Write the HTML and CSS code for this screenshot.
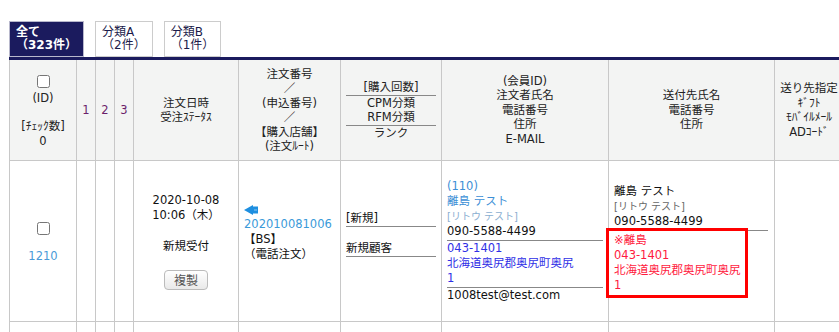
FILE: index.html
```html
<!DOCTYPE html>
<html lang="ja">
<head>
    <meta charset="UTF-8">
    <meta name="viewport" content="width=device-width, initial-scale=1.0">
    <title>受注一覧</title>

    <link rel="stylesheet" href="styles.css">
</head>
<body>
    <div class="page">
        <nav class="tabs">
            <a class="tab tab-active" href="#">全て<br>（323件）</a>
            <a class="tab" href="#">分類A<br>（2件）</a>
            <a class="tab" href="#">分類B<br>（1件）</a>
        </nav>

        <section class="list">
            <table class="orders">
                <colgroup>
                    <col class="col-id">
                    <col class="col-num">
                    <col class="col-num">
                    <col class="col-num">
                    <col class="col-date">
                    <col class="col-order">
                    <col class="col-rank">
                    <col class="col-customer">
                    <col class="col-shipping">
                    <col class="col-extra">
                </colgroup>
                <thead>
                    <tr>
                        <th>
                            <input type="checkbox" class="check">
                            <div>(ID)</div>
                            <div class="check-count">[ﾁｪｯｸ数]<br>0</div>
                        </th>
                        <th class="num">1</th>
                        <th class="num">2</th>
                        <th class="num">3</th>
                        <th>注文日時<br>受注ｽﾃｰﾀｽ</th>
                        <th>注文番号<br>／<br>(申込番号)<br>／<br>【購入店舗】<br>(注文ﾙｰﾄ)</th>
                        <th>
                            <div class="rank-head">[購入回数]</div>
                            <div class="rank-head">CPM分類<br>RFM分類</div>
                            <div>ランク</div>
                        </th>
                        <th>(会員ID)<br>注文者氏名<br>電話番号<br>住所<br>E-MAIL</th>
                        <th>送付先氏名<br>電話番号<br>住所</th>
                        <th class="extra">送り先指定<br>ｷﾞﾌﾄ<br>ﾓﾊﾞｲﾙﾒｰﾙ<br>ADｺｰﾄﾞ</th>
                    </tr>
                </thead>
                <tbody>
                    <tr class="order-row">
                        <td class="center">
                            <input type="checkbox" class="check">
                            <a class="order-id" href="#">1210</a>
                        </td>
                        <td></td>
                        <td></td>
                        <td></td>
                        <td class="center">
                            <div>2020-10-08<br>10:06（木）</div>
                            <div class="status">新規受付</div>
                            <button type="button" class="copy-btn">複製</button>
                        </td>
                        <td>
                            <div class="route">
                                <svg class="route-icon" width="14" height="10" viewBox="0 0 14 10">
                                    <polygon points="0,5 9,0 9,10" fill="#1e8fe0"/>
                                    <rect x="9" y="1.5" width="5" height="7" fill="#1e8fe0"/>
                                    <rect x="10" y="4.5" width="3" height="1" fill="#8cc6f0"/>
                                </svg>
                                <a class="order-no" href="#">202010081006</a>
                                <div>【BS】</div>
                                <div>（電話注文）</div>
                            </div>
                        </td>
                        <td>
                            <div class="rank">
                                <div class="rank-item">[新規]</div>
                                <div class="rank-item">新規顧客</div>
                            </div>
                        </td>
                        <td class="customer">
                            <div class="info-block">
                                <a class="member-link" href="#">(110)</a>
                                <a class="member-link" href="#">離島 テスト</a>
                                <div class="kana">[リトウ テスト]</div>
                                <div>090-5588-4499</div>
                            </div>
                            <div class="info-block address">043-1401<br>北海道奥尻郡奥尻町奥尻<br>1</div>
                            <div>1008test@test.com</div>
                        </td>
                        <td class="shipping">
                            <div class="info-block">
                                <div>離島 テスト</div>
                                <div class="kana kana-gray">[リトウ テスト]</div>
                                <div>090-5588-4499</div>
                            </div>
                            <div class="remote-box">※離島<br>043-1401<br>北海道奥尻郡奥尻町奥尻<br>1</div>
                        </td>
                        <td></td>
                    </tr>
                    <tr class="next-row">
                        <td></td><td></td><td></td><td></td><td></td>
                        <td></td><td></td><td></td><td></td><td></td>
                    </tr>
                </tbody>
            </table>
        </section>
    </div>
</body>
</html>
```

FILE: styles.css
```css
body {
    margin: 0;
    overflow: hidden;

    font-family: "DejaVu Sans", "Noto Sans CJK JP", sans-serif;
    font-size: 11.5px;
    color: #111;
    background-color: #fff;
}

.page {
    padding: 21px 0 0 9px;
}

/* tabs */

.tabs {
    display: flex;
    gap: 11px;
}

.tab {
    display: block;
    box-sizing: border-box;
    height: 36px;
    padding: 4px 6px 0;

    font-size: 12px;
    line-height: 12.5px;
    color: #1b1b4a;
    text-decoration: none;

    background-color: #fff;
    border: 1px solid #ccc;
}

.tab-active {
    color: #fff;
    font-weight: bold;
    background-color: #1b1b5e;
    border-color: #b8b8cc;
}

/* table */

.list {
    width: 850px;
    border-top: 3px solid #1b1b5e;
}

.orders {
    width: 845px;
    table-layout: fixed;
    border-collapse: collapse;
}

.col-id { width: 67px; }
.col-num { width: 19px; }
.col-date { width: 105px; }
.col-order { width: 102px; }
.col-rank { width: 101px; }
.col-customer { width: 167px; }
.col-shipping { width: 166px; }
.col-extra { width: 99px; }

.orders th,
.orders td {
    padding: 0 5px;
    vertical-align: middle;
    text-align: left;
    line-height: 15px;

    border: 1px solid #c8c8c8;
}

.orders thead th {
    height: 100px;

    font-weight: normal;
    line-height: 14.5px;
    color: #222;
    text-align: center;

    background-color: #f3f4f3;
    border-top: none;
}

.orders th.num {
    padding: 0;
    color: #6b1f6b;
}

.orders th.extra {
    padding: 0 30px 0 0;
    white-space: nowrap;
}

.check {
    display: block;
    margin: 3px auto;
}

.check-count {
    margin-top: 14px;
}

.rank-head {
    border-bottom: 1px solid #888;
}

.orders td.center {
    text-align: center;
}

.order-row td {
    height: 160px;
}

.next-row td {
    height: 20px;
}

a {
    text-decoration: none;
}

.order-id {
    display: block;
    margin-top: 14px;
    color: #4a9ad8;
}

.status {
    margin-top: 16px;
}

.copy-btn {
    height: 20px;
    margin-top: 16px;
    padding: 0 9px;

    font-family: inherit;
    font-size: 12px;
    color: #555;

    background: linear-gradient(#fff, #e9e9e9);
    border: 1px solid #bbb;
    border-radius: 4px;
}

.route {
    padding-bottom: 16px;
}

.route-icon {
    display: block;
    margin-bottom: 2px;
}

.order-no {
    color: #3a9ad9;
}

.rank {
    padding-bottom: 15px;
}

.rank-item {
    border-bottom: 1px solid #888;
}

.rank-item + .rank-item {
    margin-top: 14px;
}

.info-block {
    padding-bottom: 1px;
    border-bottom: 1px solid #888;
}

.member-link {
    display: block;
    color: #3d8fd6;
}

.kana {
    margin-top: 1px;
    font-size: 10px;
    line-height: 14px;
    color: #8aaed0;
}

.kana-gray {
    color: #666;
}

.address {
    color: #2f2fe6;
}

.orders td.shipping {
    padding-right: 6px;
}

.remote-box {
    position: relative;
    width: fit-content;
    margin: -3px 0 0 -8px;
    padding: 2px 4px 2px 5px;

    color: #ff1a40;

    background-color: #fff;
    border: 3px solid #f00;
}
```
